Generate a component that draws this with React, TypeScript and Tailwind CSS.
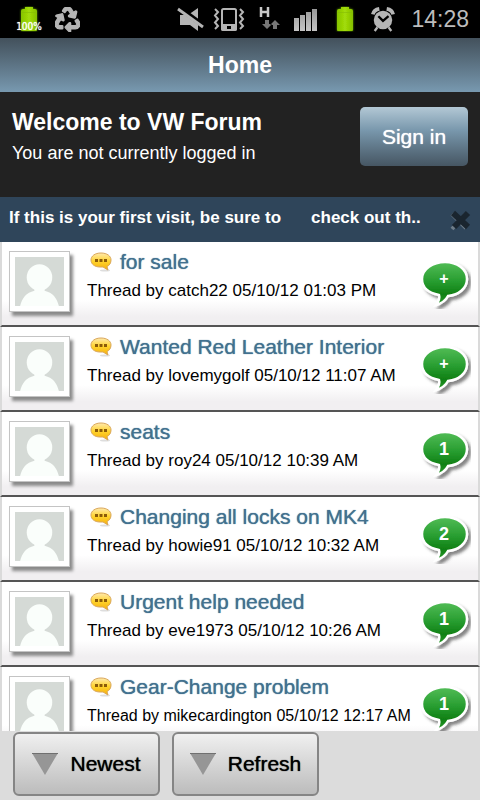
import { FaRecycle } from "react-icons/fa"
import clsx from "clsx"

const threads = [
  { title: "for sale", author: "catch22", date: "05/10/12 01:03 PM", replies: "+" },
  { title: "Wanted Red Leather Interior", author: "lovemygolf", date: "05/10/12 11:07 AM", replies: "+" },
  { title: "seats", author: "roy24", date: "05/10/12 10:39 AM", replies: "1" },
  { title: "Changing all locks on MK4", author: "howie91", date: "05/10/12 10:32 AM", replies: "2" },
  { title: "Urgent help needed", author: "eve1973", date: "05/10/12 10:26 AM", replies: "1" },
  { title: "Gear-Change problem", author: "mikecardington", date: "05/10/12 12:17 AM", replies: "1" },
]

function Battery({ className }: { className: string }) {
  return (
    <svg viewBox="0 0 20 26" className={className} aria-hidden="true">
      <defs>
        <linearGradient id="battery" x1="0" x2="1">
          <stop offset="0" stopColor="#86c400" />
          <stop offset="0.5" stopColor="#a2dc08" />
          <stop offset="1" stopColor="#84bf00" />
        </linearGradient>
        <filter id="batteryGlow" x="-30%" y="-30%" width="160%" height="160%">
          <feDropShadow dx="0" dy="0" stdDeviation="1" floodColor="#5f9a00" />
        </filter>
      </defs>
      <path
        d="M6 1h8v2h2q2 0 2 2v19q0 1-1 1H3q-1 0-1-1V5q0-2 2-2h2z"
        fill="url(#battery)"
        filter="url(#batteryGlow)"
      />
      <path d="M2 6.500h16" stroke="#86bd05" opacity="0.600" />
    </svg>
  )
}

function StatusBar() {
  return (
    <div className="flex h-[38px] shrink-0 items-center justify-between bg-black pr-[11px] pl-[15px] text-[#b5b5b5]">
      <div className="flex items-center gap-3">
        <div className="relative h-[26px] w-7">
          <Battery className="mx-auto h-[26px] w-5" />
          <span className="absolute inset-x-0 top-4 text-center font-['DejaVu_Sans_Condensed','DejaVu_Sans'] text-[10px] leading-[9px] text-white [text-shadow:0_0_1px_#fff]">
            100%
          </span>
        </div>
        <FaRecycle className="h-[25px] w-[25px]" stroke="currentColor" strokeWidth="28" />
      </div>
      <div className="flex items-center gap-2">
        {/* Muted speaker */}
        <svg viewBox="0 0 28 26" className="h-[26px] w-7" aria-hidden="true">
          <path d="M3 9h8l10-7v23l-8-6H3z" fill="currentColor" />
          <path d="M1 1l26 19" stroke="#000" strokeWidth="5" />
          <path d="M1 3l25 18" stroke="currentColor" strokeWidth="2.800" />
        </svg>
        {/* Vibrate */}
        <svg viewBox="0 0 32 26" className="h-[26px] w-8" aria-hidden="true">
          <rect x="9" y="3" width="14" height="21" rx="1.500" fill="none" stroke="currentColor" strokeWidth="2" />
          <path d="M8 18h16v5a2 2 0 0 1-2 2H10a2 2 0 0 1-2-2z" fill="currentColor" />
          <rect x="14" y="20" width="4" height="3" fill="#000" />
          <path
            d="M2 3l3 3-3 3.500 3 3.500-3 3.500 3 3.500-3 3M27 3l3 3-3 3.500 3 3.500-3 3.500 3 3.500-3 3"
            fill="none"
            stroke="currentColor"
            strokeWidth="2"
          />
        </svg>
        {/* Mobile data */}
        <svg viewBox="0 0 32 26" className="h-[26px] w-8" aria-hidden="true">
          <path d="M8 1v10M15 1v10M8 6h7" fill="none" stroke="#c8c8c8" strokeWidth="2.500" />
          <path d="M12 14h4v4h3l-5 5-5-5h3zM20 23h4v-4h3l-5-5-5 5h3z" fill="#777" />
        </svg>
        <svg viewBox="0 0 26 26" className="h-[26px] w-[26px]" aria-hidden="true">
          <defs>
            <linearGradient id="signal" x2="0" y2="1">
              <stop offset="0" stopColor="#999" />
              <stop offset="1" stopColor="#c5c5c5" />
            </linearGradient>
          </defs>
          <path d="M1 12h5v13H1zM7 9h5v16H7zM13 6h5v19h-5zM19 3h5v22h-5z" fill="url(#signal)" />
        </svg>
        <Battery className="mx-2 h-[26px] w-5" />
        {/* Alarm */}
        <svg viewBox="0 0 26 28" className="h-[26px] w-6" fill="none" stroke="currentColor" aria-hidden="true">
          <circle cx="13" cy="15" r="10" fill="currentColor" stroke="none" />
          <path d="M2 9Q3 4 9 3M24 9Q23 4 17 3" strokeWidth="4" />
          <path d="M7 23l-3 4M19 23l3 4" strokeWidth="2.500" />
          <path d="M8 11l5 5 6-5" stroke="#000" strokeWidth="2.500" />
        </svg>
        <time className="ml-2 text-[23px] text-[#bcbcbc]">14:28</time>
      </div>
    </div>
  )
}

function Avatar() {
  return (
    <div className="h-[61px] w-[61px] shrink-0 border border-[#c4c4c4] bg-white p-[5px] shadow-[3px_4px_3px_#8a8a8a]">
      <svg viewBox="0 0 48 48" className="h-full w-full bg-[#d5dad6]" aria-hidden="true">
        <ellipse cx="24" cy="20" rx="12.500" ry="13" fill="#fafefb" />
        <path d="M19 29v4C11 35 7 40 5 48h38c-2-8-6-13-14-15v-4z" fill="#fafefb" />
      </svg>
    </div>
  )
}

function ThreadIcon() {
  return (
    <svg viewBox="0 0 22 20" className="h-5 w-[22px] shrink-0" aria-hidden="true">
      <defs>
        <linearGradient id="thread" x2="0" y2="1">
          <stop offset="0" stopColor="#ffe9ae" />
          <stop offset="0.5" stopColor="#ffd32b" />
          <stop offset="1" stopColor="#f5ae0c" />
        </linearGradient>
      </defs>
      <ellipse cx="15" cy="18.500" rx="5" ry="1" fill="#ddd" />
      <path
        d="M11 1C17 1 21 4 21 8c0 3-1.500 5.500-4 6.500l1 3.500-5-3H10C4.500 15 1 12 1 8s4-7 10-7z"
        fill="url(#thread)"
        stroke="#d9a65a"
      />
      <path d="M5 7h3v3H5zM9.500 7h3v3h-3zM14 7h3v3h-3z" fill="#8a5a08" />
    </svg>
  )
}

function ReplyBubble({ label }: { label: string }) {
  return (
    <button className="relative h-12 w-[50px] shrink-0 self-start">
      <svg viewBox="0 0 50 48" className="h-12 w-[50px]" aria-hidden="true">
        <defs>
          <linearGradient id="bubble" x2="0" y2="1">
            <stop offset="0" stopColor="#52bd57" />
            <stop offset="0.450" stopColor="#289d30" />
            <stop offset="0.750" stopColor="#108014" />
            <stop offset="1" stopColor="#2b9b2e" />
          </linearGradient>
          <filter id="bubbleShadow" x="-20%" y="-20%" width="150%" height="150%">
            <feDropShadow dx="3" dy="3" stdDeviation="1.800" floodColor="#333" floodOpacity="0.600" />
          </filter>
        </defs>
        <path
          d="M24 1c12 0 22 7 22 17 0 9-8 16-19 17-2 4-5 7-12 9 3-4 4-7 3-10C8 32 1 27 1 18 1 8 12 1 24 1z"
          fill="url(#bubble)"
          stroke="#fff"
          strokeWidth="2.500"
          filter="url(#bubbleShadow)"
        />
      </svg>
      <span
        className={clsx(
          "absolute inset-x-0 top-2 pr-1 text-center leading-5 font-bold text-white",
          label === "+" ? "text-base" : "text-lg",
        )}
      >
        {label}
      </span>
    </button>
  )
}

function ToolbarButton({ label }: { label: string }) {
  return (
    <button className="flex h-16 w-[147px] items-center justify-center gap-3 rounded-md border-2 border-[#858585] bg-linear-to-b from-[#f0f0f0] to-[#bcbcbc] text-[21px] text-black [text-shadow:0_0_1px_currentColor]">
      <svg viewBox="0 0 26 22" className="h-[22px] w-[26px]" aria-hidden="true">
        <path d="M0 0h26L13 22z" fill="#969696" />
        <path d="M0 .5h26" stroke="#707070" />
      </svg>
      {label}
    </button>
  )
}

export default function App() {
  return (
    <div className="flex h-screen flex-col overflow-hidden bg-white font-['Liberation_Sans',sans-serif]">
      <StatusBar />

      <header className="flex h-[54px] shrink-0 items-center justify-center bg-linear-to-b from-[#43515c] to-[#7899b0]">
        <h1 className="text-[23px] font-bold text-white">Home</h1>
      </header>

      <section className="flex h-[105px] shrink-0 items-start justify-between bg-[#222] px-3 pt-[15px] text-white">
        <div>
          <h2 className="text-[23px] leading-[30px] font-bold">Welcome to VW Forum</h2>
          <p className="text-lg leading-8">You are not currently logged in</p>
        </div>
        <button className="h-[59px] w-[108px] rounded-[5px] bg-linear-to-b from-[#b3c8d5] via-[#7897ac] via-40% to-[#465663] text-[21px] [text-shadow:0_0_1px_currentColor]">
          Sign in
        </button>
      </section>

      {/* First visit notice */}
      <div className="flex h-[45px] shrink-0 items-center bg-[#2f455a] pr-2 pb-1 pl-[9px] text-[17px] font-bold text-white">
        <p className="shrink-0">If this is your first visit, be sure to</p>
        <a href="#faq" className="ml-[30px] min-w-0 flex-1 overflow-hidden whitespace-nowrap">
          check out th..
        </a>
        <button aria-label="Dismiss" className="pt-1">
          <svg viewBox="0 0 24 24" className="h-6 w-6" fill="none" aria-hidden="true">
            <path d="M4 6l14 14M18 6L4 21" stroke="#6f7d89" strokeWidth="4" />
            <path d="M5 5l15 14M20 5L6 19" stroke="#1a252f" strokeWidth="6" />
          </svg>
        </button>
      </div>

      <ul className="min-h-0 flex-1 overflow-y-auto [scrollbar-width:none]">
        {threads.map((thread) => (
          <li
            key={thread.title}
            className="flex h-[85px] items-start border-x-2 border-b-2 border-x-[#dadada] border-b-[#555] bg-linear-to-b from-white from-70% to-[#f1eff1] to-90% pt-[9px] pr-[7px] pl-[7px]"
          >
            <Avatar />
            <div className="ml-[17px] min-w-0 flex-1">
              <h3 className="flex items-center gap-2 pl-[3px] text-[21px] leading-[22px] text-[#42718f] [text-shadow:0_0_1px_currentColor]">
                <ThreadIcon />
                <a href="#thread" className="whitespace-nowrap">{thread.title}</a>
              </h3>
              {/* Long author names drop a size to stay on one line */}
              <p
                className={clsx(
                  "leading-9 whitespace-nowrap text-black",
                  thread.author.length > 12 ? "text-base" : "text-[17px]",
                )}
              >
                Thread by {thread.author} {thread.date}
              </p>
            </div>
            <div className="pt-[10px]">
              <ReplyBubble label={thread.replies} />
            </div>
          </li>
        ))}
      </ul>

      <footer className="flex h-[69px] shrink-0 items-start gap-3 bg-[#dcdcdc] px-[13px] pt-px">
        <ToolbarButton label="Newest" />
        <ToolbarButton label="Refresh" />
      </footer>
    </div>
  )
}
